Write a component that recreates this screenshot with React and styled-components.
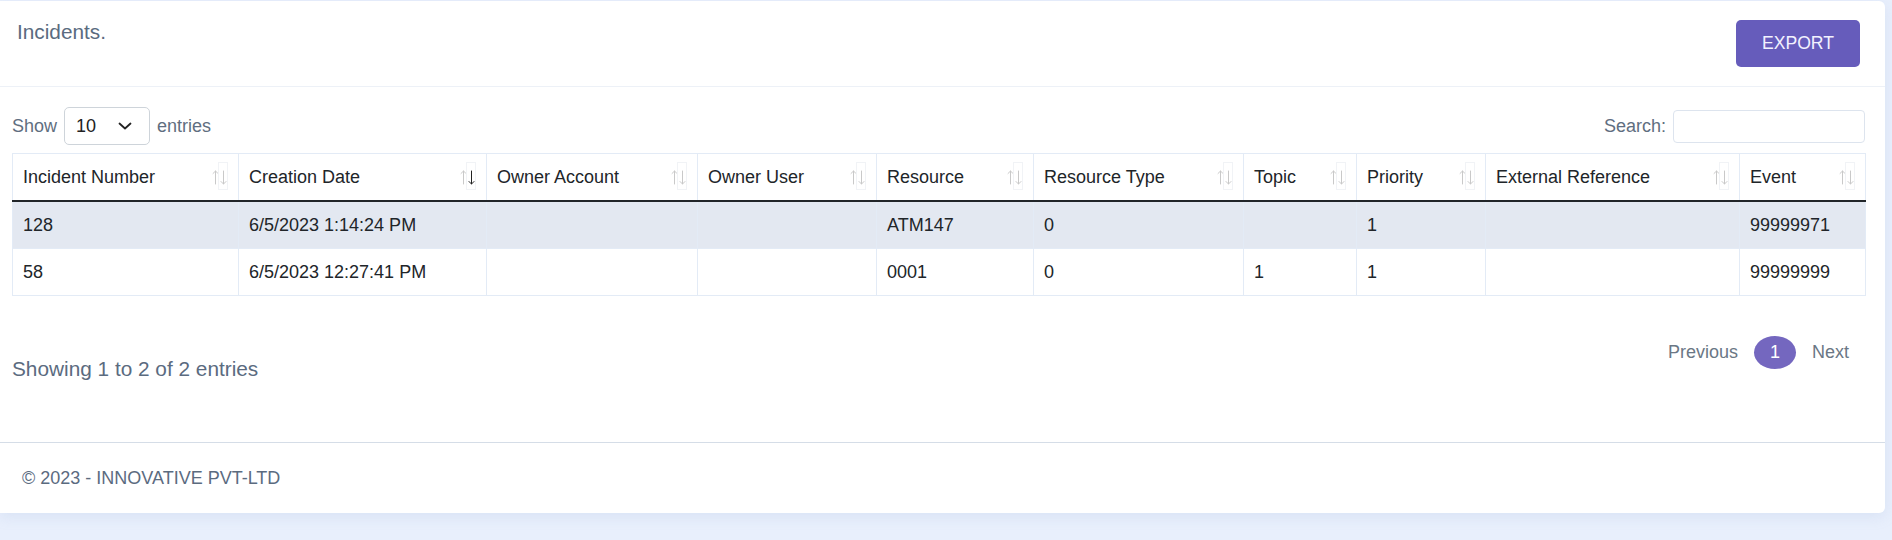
import styled, { createGlobalStyle } from "styled-components";

const GlobalStyle = createGlobalStyle`
  body {
    margin: 0;
    background: #e8effc;
    font-family: "Liberation Sans", Arial, sans-serif;
  }
`;

const columns = [
  { title: "Incident Number", width: 226 },
  { title: "Creation Date", width: 248, sorted: true },
  { title: "Owner Account", width: 211 },
  { title: "Owner User", width: 179 },
  { title: "Resource", width: 157 },
  { title: "Resource Type", width: 210 },
  { title: "Topic", width: 113 },
  { title: "Priority", width: 129 },
  { title: "External Reference", width: 254 },
  { title: "Event", width: 126 },
];

const rows = [
  ["128", "6/5/2023 1:14:24 PM", "", "", "ATM147", "0", "", "1", "", "99999971"],
  ["58", "6/5/2023 12:27:41 PM", "", "", "0001", "0", "1", "1", "", "99999999"],
];

const SortIcon = ({ active }) => (
  <SortBox>
    <svg width="16" height="18" viewBox="0 0 16 18">
      <g fill="none" strokeWidth="1" strokeLinecap="round">
        <path d="M3.5 16V3M1 5.5l2.5-2.5 2.5 2.5" stroke="#c9c9c9" />
        <path
          d="M11.5 3v13M9 13.5l2.5 2.5 2.5-2.5"
          stroke={active ? "#222" : "#c9c9c9"}
        />
      </g>
    </svg>
    <DownFrame />
  </SortBox>
);

const App = () => {
  return (
    <Page>
      <GlobalStyle />
      <Card>
        <CardHeader>
          <Title>Incidents.</Title>
          <ExportButton>EXPORT</ExportButton>
        </CardHeader>
        <CardBody>
          <Controls>
            <Label>
              Show
              <Select>
                <span>10</span>
                <svg width="14" height="8" viewBox="0 0 14 8">
                  <path
                    d="M1.5 1.5l5.5 5 5.5-5"
                    fill="none"
                    stroke="#222"
                    strokeWidth="1.8"
                    strokeLinecap="round"
                    strokeLinejoin="round"
                  />
                </svg>
              </Select>
              entries
            </Label>
            <Label>
              Search:
              <SearchInput />
            </Label>
          </Controls>
          <Table>
            <colgroup>
              {columns.map((c) => (
                <col key={c.title} style={{ width: c.width }} />
              ))}
            </colgroup>
            <thead>
              <tr>
                {columns.map((c) => (
                  <Th key={c.title}>
                    <HeadInner>
                      {c.title}
                      <SortIcon active={c.sorted} />
                    </HeadInner>
                  </Th>
                ))}
              </tr>
            </thead>
            <tbody>
              {rows.map((r, i) => (
                <Tr key={i} $striped={i % 2 === 0}>
                  {r.map((v, j) => (
                    <Td key={j}>{v}</Td>
                  ))}
                </Tr>
              ))}
            </tbody>
          </Table>
          <BottomRow>
            <Info>Showing 1 to 2 of 2 entries</Info>
            <Pagination>
              <PageLink>Previous</PageLink>
              <PageCurrent>1</PageCurrent>
              <PageLink>Next</PageLink>
            </Pagination>
          </BottomRow>
        </CardBody>
        <Footer>© 2023 - INNOVATIVE PVT-LTD</Footer>
      </Card>
    </Page>
  );
};

export default App;

// Styles
const Page = styled.div`
  padding: 1px 7px 28px 0;
`;

const Card = styled.div`
  background: #fff;
  border-radius: 0 6px 6px 0;
  box-shadow: 0 4px 14px rgba(150, 170, 210, 0.18);
`;

const CardHeader = styled.div`
  display: flex;
  justify-content: space-between;
  align-items: flex-start;
  box-sizing: border-box;
  height: 86px;
  padding: 18px 25px 0 17px;
  border-bottom: 1px solid #edf1f7;
`;

const Title = styled.h1`
  margin: 0;
  font-size: 20.8px;
  font-weight: 400;
  line-height: 25px;
  color: #5a6b80;
`;

const ExportButton = styled.button`
  margin-top: 1px;
  width: 124px;
  height: 47px;
  border: none;
  border-radius: 5px;
  background: #665cbb;
  color: #f2f2ff;
  font-family: inherit;
  font-size: 17.6px;
  cursor: pointer;
`;

const CardBody = styled.div`
  padding: 20px 20px 61px 12px;
`;

const Controls = styled.div`
  display: flex;
  justify-content: space-between;
  align-items: center;
  height: 38px;
  margin-bottom: 8px;
`;

const Label = styled.label`
  display: flex;
  align-items: center;
  gap: 7px;
  font-size: 18px;
  color: #5f6e80;
`;

const Select = styled.div`
  display: flex;
  justify-content: space-between;
  align-items: center;
  box-sizing: border-box;
  width: 86px;
  height: 38px;
  padding: 0 17px 0 11px;
  border: 1px solid #ced4da;
  border-radius: 5px;
  color: #222;
  font-size: 18px;
`;

const SearchInput = styled.input`
  box-sizing: border-box;
  width: 192px;
  height: 33px;
  border: 1px solid #dde4ee;
  border-radius: 4px;
  outline: none;
`;

const Table = styled.table`
  width: 1853px;
  table-layout: fixed;
  border-collapse: collapse;
  border: 1px solid #e3ebf6;
  font-size: 18px;
  color: #212529;
`;

const Th = styled.th`
  height: 46px;
  padding: 0 10px;
  border: 1px solid #e3ebf6;
  border-bottom: 2px solid #212529;
  font-weight: 400;
  text-align: left;
`;

const HeadInner = styled.div`
  display: flex;
  justify-content: space-between;
  align-items: center;
`;

const SortBox = styled.span`
  position: relative;
  display: flex;
  width: 16px;
  height: 18px;
`;

const DownFrame = styled.span`
  position: absolute;
  left: 6px;
  top: -6px;
  width: 10px;
  height: 28px;
  border: 1px solid #f1f3f6;
  box-sizing: border-box;
`;

const Tr = styled.tr`
  background: ${(p) => (p.$striped ? "#e3e8f1" : "#fff")};
`;

const Td = styled.td`
  height: 46px;
  padding: 0 10px;
  border: 1px solid #e3ebf6;
  border-top: none;
`;

const BottomRow = styled.div`
  display: flex;
  justify-content: space-between;
  align-items: flex-start;
`;

const Info = styled.div`
  margin-top: 60px;
  font-size: 20.8px;
  line-height: 25px;
  color: #5b6b7f;
`;

const Pagination = styled.div`
  display: flex;
  align-items: center;
  gap: 16px;
  margin-top: 40px;
  margin-right: 16px;
  font-size: 18px;
`;

const PageLink = styled.span`
  color: #6b7785;
`;

const PageCurrent = styled.span`
  display: flex;
  justify-content: center;
  align-items: center;
  width: 42px;
  height: 33px;
  border-radius: 50%;
  background: #7467bf;
  color: #fff;
`;

const Footer = styled.div`
  display: flex;
  align-items: center;
  height: 70px;
  padding-left: 22px;
  border-top: 1px solid #d5dde7;
  font-size: 18px;
  color: #5b6b7f;
`;
